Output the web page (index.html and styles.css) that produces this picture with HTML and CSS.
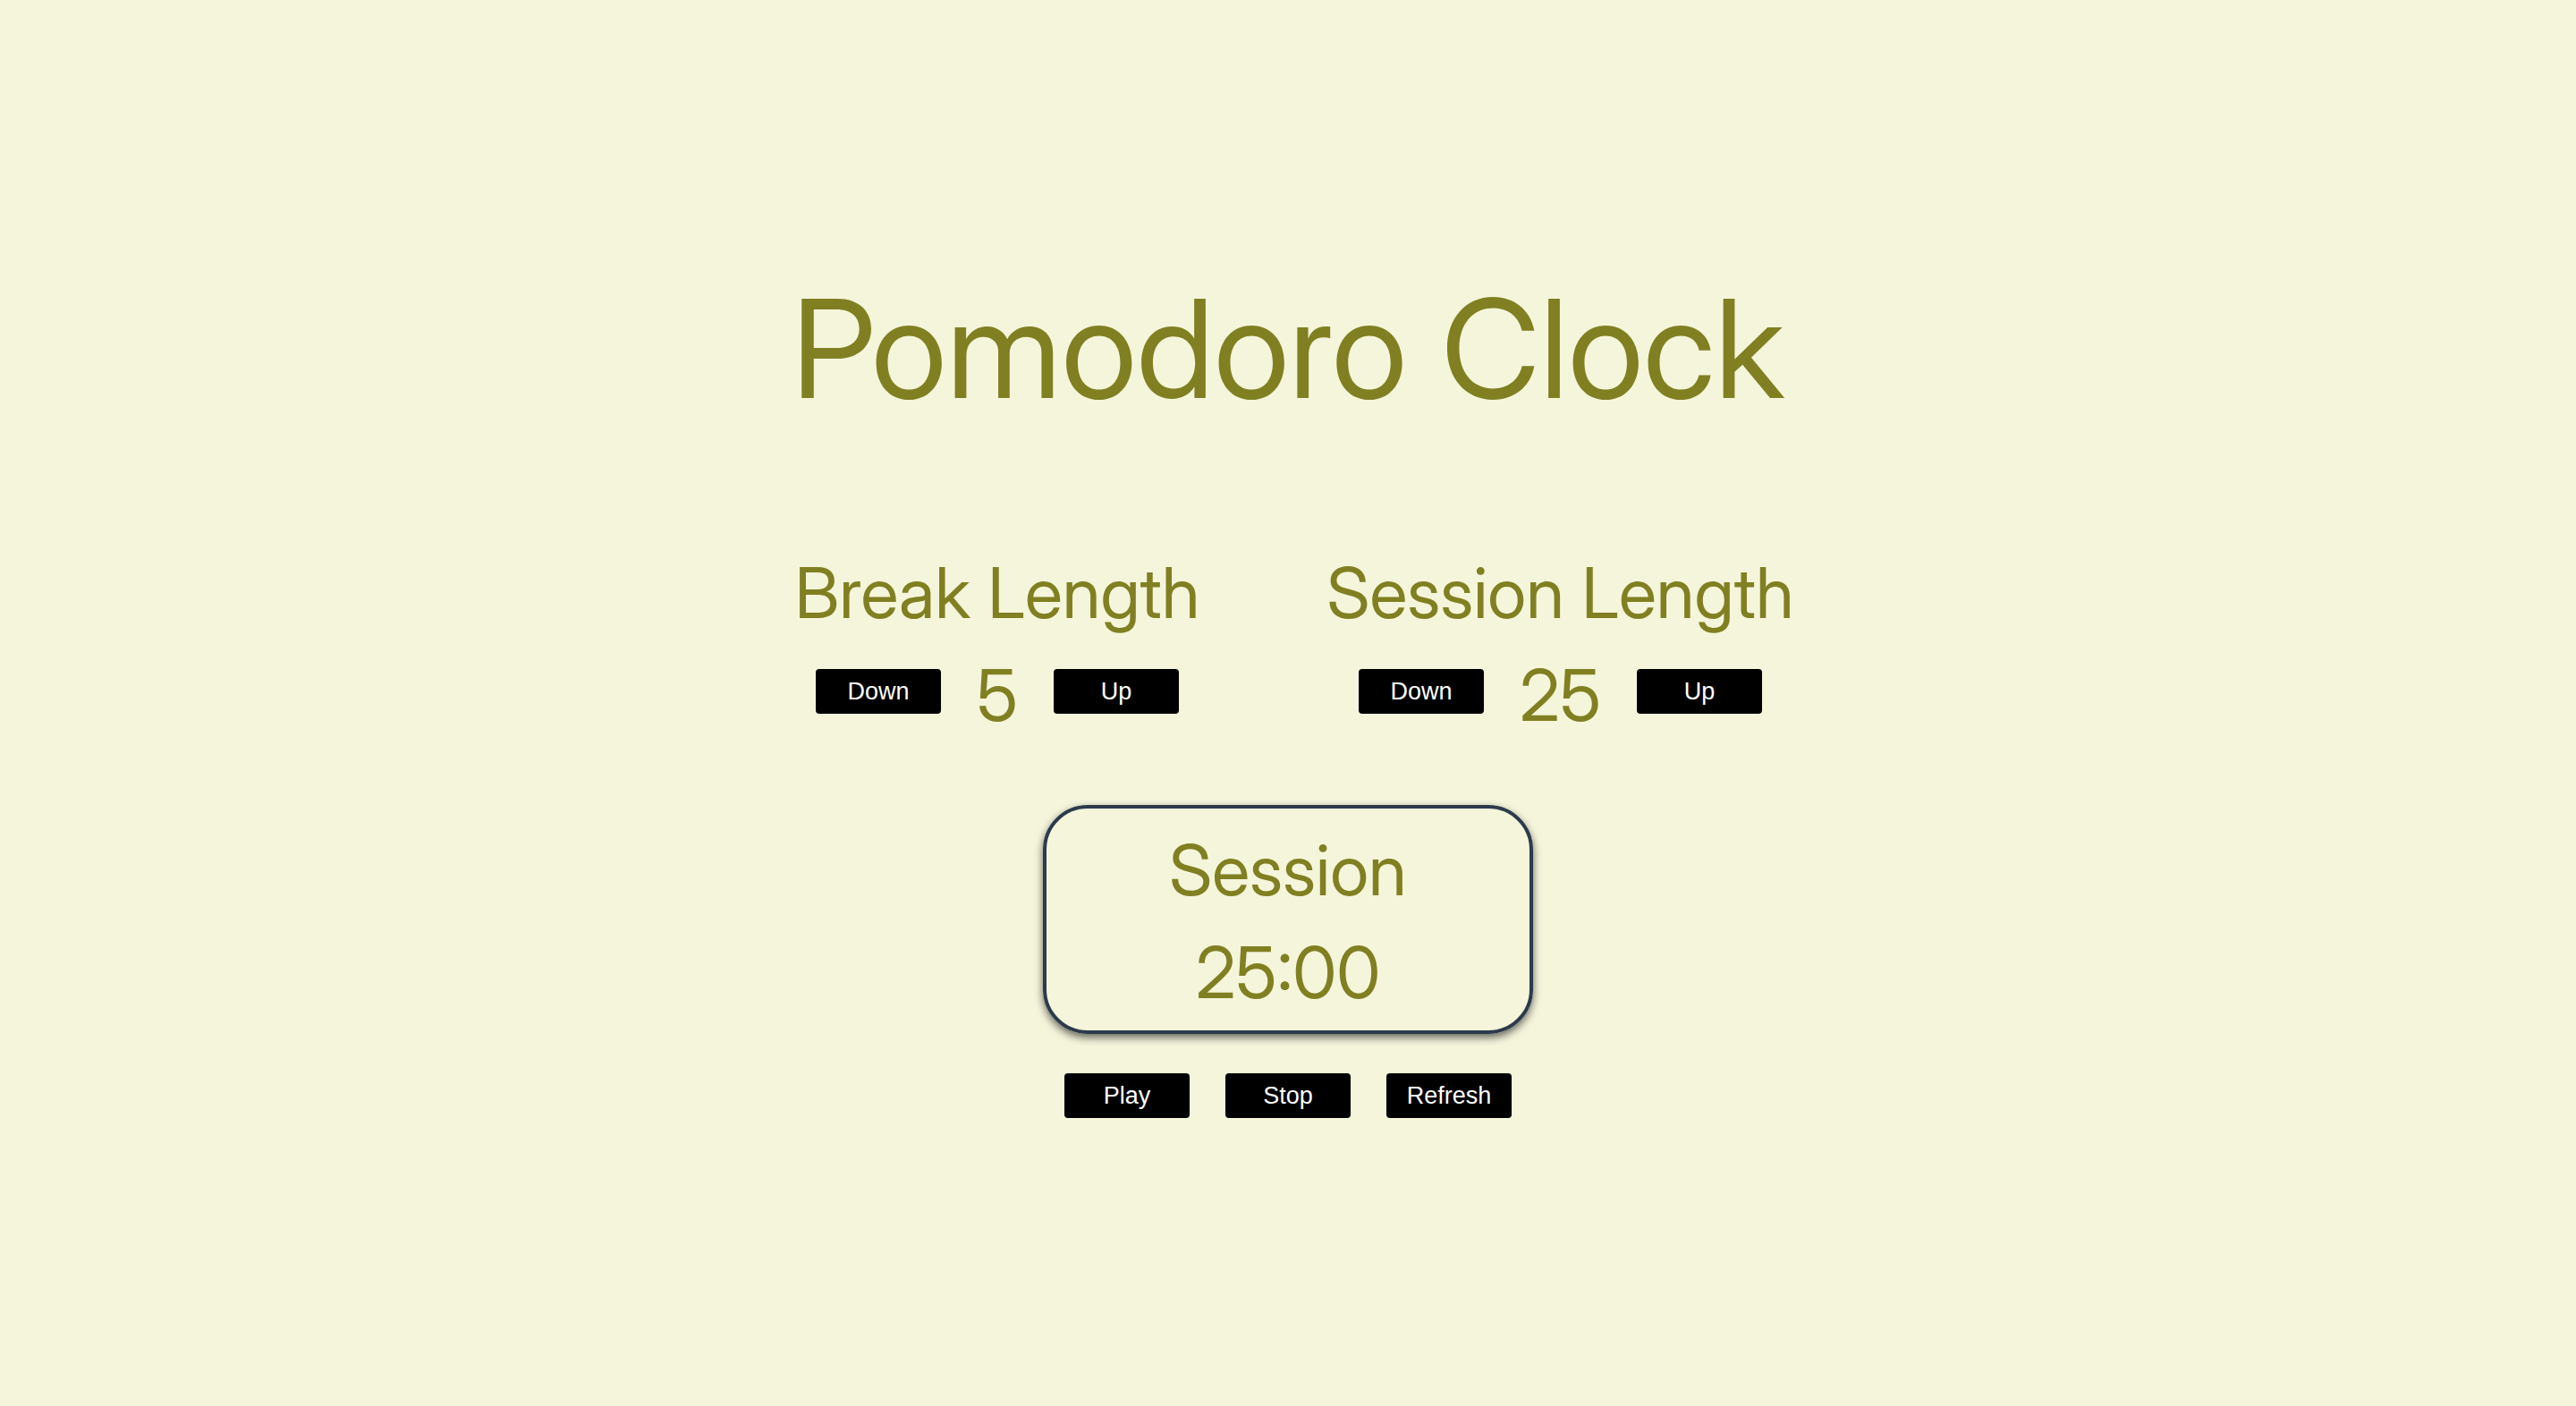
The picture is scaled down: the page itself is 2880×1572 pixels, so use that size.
FILE: index.html
```html
<!DOCTYPE html>
<html lang="en">
<head>
<meta charset="utf-8">
<title>Pomodoro Clock</title>
<link rel="stylesheet" href="styles.css">
</head>
<body>
<main class="clock">
  <h1 class="title">Pomodoro Clock</h1>
  <div class="lengths">
    <section class="length">
      <h2 class="label">Break Length</h2>
      <div class="controls">
        <button class="btn" type="button">Down</button>
        <span class="value">5</span>
        <button class="btn" type="button">Up</button>
      </div>
    </section>
    <section class="length">
      <h2 class="label">Session Length</h2>
      <div class="controls">
        <button class="btn" type="button">Down</button>
        <span class="value">25</span>
        <button class="btn" type="button">Up</button>
      </div>
    </section>
  </div>
  <section class="timer">
    <h2 class="label">Session</h2>
    <div class="value">25:00</div>
  </section>
  <div class="actions">
    <button class="btn" type="button">Play</button>
    <button class="btn" type="button">Stop</button>
    <button class="btn" type="button">Refresh</button>
  </div>
</main>
</body>
</html>
```

FILE: styles.css
```css
* { box-sizing: border-box; }
body {
  margin: 0;
  min-height: 100vh;
  padding-bottom: 46px;
  display: flex;
  justify-content: center;
  align-items: center;
  background: #f5f5dc;
  color: #808022;
  font-family: "Inter Display", Inter, "Liberation Sans", sans-serif;
  font-variation-settings: "opsz" 32;
  font-weight: 420;
  line-height: 106px;
}
.clock { display: flex; flex-direction: column; align-items: center; }
.title { margin: 0 0 106px; font-size: 153px; line-height: 228px; font-weight: 420; }
.lengths { display: flex; gap: 142px; padding-left: 14px; }
.length { display: flex; flex-direction: column; align-items: center; }
.label { margin: 0; font-size: 78px; font-weight: 420; }
.controls { display: flex; align-items: center; gap: 40px; }
.value { padding-top: 8px; font-size: 80px; }
.btn {
  width: 140px;
  height: 50px;
  padding: 0;
  border: 0;
  border-radius: 4px;
  background: #000;
  color: #fff;
  font: 27px/30px "Liberation Sans", Arial, sans-serif;
}
.timer {
  width: 548px;
  margin-top: 70px;
  padding: 16px 0 12px;
  border: 4px solid #2c3a4b;
  border-radius: 50px;
  text-align: center;
  box-shadow: 0 4px 10px rgba(0, 0, 0, 0.6);
}
.actions { display: flex; gap: 40px; margin-top: 44px; }
```
